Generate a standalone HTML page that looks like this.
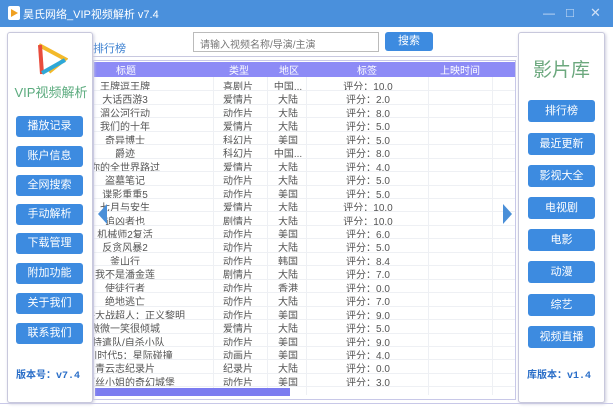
<!DOCTYPE html><html><head><meta charset="utf-8"><style>
*{margin:0;padding:0;box-sizing:border-box}
body{width:613px;height:409px;overflow:hidden;background:#fff;font-family:"Liberation Sans","Noto Sans CJK SC",sans-serif;position:relative}
.tb{position:absolute;left:0;top:0;width:613px;height:27px;background:#4a90dc}
.tb span{position:absolute;left:23px;top:6px;color:#fff;font-size:11px}
.pan{position:absolute;border:1px solid #c8c8dc;border-radius:3px;background:#fff;box-shadow:1px 1px 3px #ccd}
.btn{position:absolute;background:#3d8be0;color:#fff;font-size:11px;text-align:center;border-radius:3px}
.h{position:absolute;left:94px;top:62px;width:421px;height:15px;background:#8d8bf6;color:#fff;font-size:10px}
.h span,.r span{position:absolute;top:0px;transform:translateX(-50%);white-space:nowrap}
.r{position:absolute;left:94px;width:421px;height:13.45px;font-size:10px;color:#555;border-bottom:1px solid #eef0f4;overflow:hidden}
.vl{position:absolute;top:77px;height:318px;width:1px;background:#eef0f4}
</style></head><body>
<div class="tb"><svg style="position:absolute;left:8px;top:6px" width="12" height="14"><rect width="12" height="14" rx="2" fill="#fff"/><path d="M3 3 L10 7 L3 11Z" fill="#f0a020"/></svg><span>昊氏网络_VIP视频解析 v7.4</span>
<span style="left:543px;top:6px;font-size:12px;color:#cfe0f6">—</span><span style="left:566px;top:5px;font-size:13px;color:#cfe0f6">□</span><span style="left:590px;top:5px;font-size:13px;color:#cfe0f6">✕</span></div>
<div style="position:absolute;left:93px;top:56px;width:424px;height:1px;background:#c8c8e0"></div>
<div style="position:absolute;left:93px;top:40px;color:#3a7fd0;font-size:11px">排行榜</div>
<div style="position:absolute;left:193px;top:32px;width:186px;height:20px;border:1px solid #bbb;font-size:10px;color:#777;padding:3px 6px">请输入视频名称/导演/主演</div>
<div class="btn" style="left:385px;top:32px;width:48px;height:19px;line-height:19px">搜索</div>
<div style="position:absolute;left:93px;top:60px;width:423px;height:340px;border:1px solid #c8c8e8"></div>
<div style="position:absolute;left:0;top:403px;width:613px;height:1px;background:#c8c8e8"></div>
<div class="h"><span style="left:32px">标题</span><span style="left:145px">类型</span><span style="left:195px">地区</span><span style="left:273px">标签</span><span style="left:366px">上映时间</span></div>
<div class="vl" style="left:213px"></div><div class="vl" style="left:267px"></div><div class="vl" style="left:306px"></div><div class="vl" style="left:428px"></div><div class="vl" style="left:492px"></div>
<div id="rows"></div>
<div style="position:absolute;left:95px;top:388px;width:195px;height:8px;background:#7c7cf0"></div>
<svg style="position:absolute;left:96px;top:203px" width="12" height="22"><path d="M11 1 L2 11 L11 21Z" fill="#4a8fd8"/></svg>
<svg style="position:absolute;left:502px;top:203px" width="12" height="22"><path d="M1 1 L10 11 L1 21Z" fill="#4a8fd8"/></svg>
<div class="pan" style="left:7px;top:32px;width:86px;height:371px"></div>
<svg style="position:absolute;left:36px;top:42px" width="32" height="36"><path d="M3 3 L29 17 L13 30" stroke="#f3b92a" stroke-width="4" fill="none"/><path d="M4 3 L6 32" stroke="#e84c3d" stroke-width="4"/><path d="M6 31 L29 18" stroke="#2ea8d8" stroke-width="4"/></svg>
<div style="position:absolute;left:9px;top:82px;width:84px;text-align:center;font-size:13px;color:#5bab7e">VIP视频解析</div>
<div class="pan" style="left:518px;top:32px;width:87px;height:371px"></div>
<div style="position:absolute;left:518px;top:55px;width:87px;text-align:center;font-size:19px;color:#6ca87e">影片库</div>
<div style="position:absolute;left:16px;top:366px;font-size:10px;font-weight:bold;color:#2a6ec8;font-family:'Liberation Mono','Noto Sans CJK SC',monospace">版本号：v7.4</div>
<div style="position:absolute;left:527px;top:366px;font-size:10px;font-weight:bold;color:#2a6ec8;font-family:'Liberation Mono','Noto Sans CJK SC',monospace">库版本：v1.4</div>
<div id="bl"></div>
<script>
var d=[["王牌逗王牌","喜剧片","中国...","10.0"],["大话西游3","爱情片","大陆","2.0"],["湄公河行动","动作片","大陆","8.0"],["我们的十年","爱情片","大陆","5.0"],["奇异博士","科幻片","美国","5.0"],["爵迹","科幻片","中国...","8.0"],["你的全世界路过","爱情片","大陆","4.0"],["盗墓笔记","动作片","大陆","5.0"],["谍影重重5","动作片","美国","5.0"],["七月与安生","爱情片","大陆","10.0"],["追凶者也","剧情片","大陆","10.0"],["机械师2复活","动作片","美国","6.0"],["反贪风暴2","动作片","大陆","5.0"],["釜山行","动作片","韩国","8.4"],["我不是潘金莲","剧情片","大陆","7.0"],["使徒行者","动作片","香港","0.0"],["绝地逃亡","动作片","大陆","7.0"],["蝙蝠侠大战超人：正义黎明","动作片","美国","9.0"],["微微一笑很倾城","爱情片","大陆","5.0"],["X特遣队/自杀小队","动作片","美国","9.0"],["冰川时代5：星际碰撞","动画片","美国","4.0"],["青云志纪录片","纪录片","大陆","0.0"],["爱丽丝小姐的奇幻城堡","动作片","美国","3.0"]];
var h="";d.forEach(function(r,i){h+='<div class="r" style="top:'+(78+i*13.45)+'px"><span style="left:31px">'+r[0]+'</span><span style="left:144px">'+r[1]+'</span><span style="left:194px">'+r[2]+'</span><span style="left:274px">评分：'+r[3]+'</span></div>'});
document.getElementById("rows").innerHTML=h;
var L=[["播放记录",116],["账户信息",146],["全网搜索",175],["手动解析",204],["下载管理",233],["附加功能",263],["关于我们",293],["联系我们",323]];
var R=[["排行榜",100],["最近更新",133],["影视大全",165],["电视剧",197],["电影",229],["动漫",261],["综艺",294],["视频直播",326]];
h="";L.forEach(function(b){h+='<div class="btn" style="left:16px;top:'+b[1]+'px;width:67px;height:21px;line-height:21px">'+b[0]+'</div>'});
R.forEach(function(b){h+='<div class="btn" style="left:528px;top:'+b[1]+'px;width:67px;height:22px;line-height:22px">'+b[0]+'</div>'});
document.getElementById("bl").innerHTML=h;
</script>
</body></html>
